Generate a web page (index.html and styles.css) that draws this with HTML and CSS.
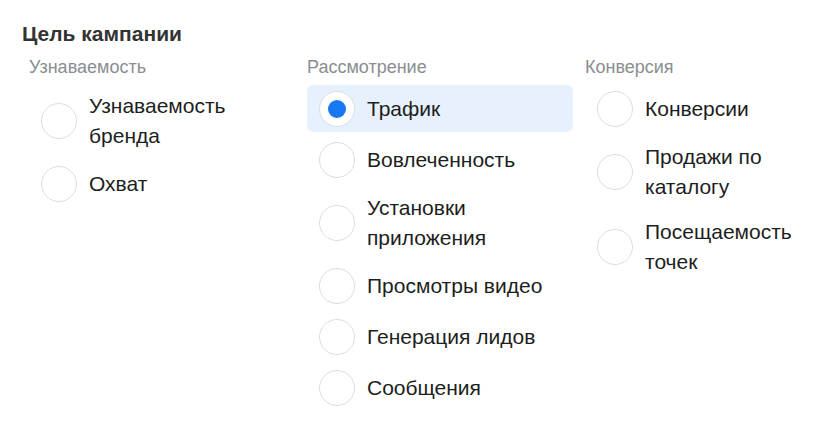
FILE: index.html
```html
<!DOCTYPE html>
<html lang="ru">
<head>
    <meta charset="UTF-8">
    <meta name="viewport" content="width=device-width, initial-scale=1.0">
    <title>Цель кампании</title>
    <link rel="stylesheet" href="styles.css">
</head>
<body>

<div class="objective">
    <h2 class="objective-title">Цель кампании</h2>

    <div class="groups">
        <div class="group">
            <div class="group-label">Узнаваемость</div>
            <div class="option"><span class="radio"></span><span class="option-text">Узнаваемость бренда</span></div>
            <div class="option"><span class="radio"></span><span class="option-text">Охват</span></div>
        </div>

        <div class="group">
            <div class="group-label">Рассмотрение</div>
            <div class="option selected"><span class="radio"></span><span class="option-text">Трафик</span></div>
            <div class="option"><span class="radio"></span><span class="option-text">Вовлеченность</span></div>
            <div class="option"><span class="radio"></span><span class="option-text">Установки приложения</span></div>
            <div class="option"><span class="radio"></span><span class="option-text">Просмотры видео</span></div>
            <div class="option"><span class="radio"></span><span class="option-text">Генерация лидов</span></div>
            <div class="option"><span class="radio"></span><span class="option-text">Сообщения</span></div>
        </div>

        <div class="group">
            <div class="group-label">Конверсия</div>
            <div class="option"><span class="radio"></span><span class="option-text">Конверсии</span></div>
            <div class="option"><span class="radio"></span><span class="option-text">Продажи по каталогу</span></div>
            <div class="option"><span class="radio"></span><span class="option-text">Посещаемость точек</span></div>
        </div>
    </div>
</div>

</body>
</html>
```

FILE: styles.css
```css
body {
    margin: 0;
    background-color: #fff;
    font-family: "Liberation Sans", Arial, sans-serif;
    color: #1c1e21;
}
.objective {
    padding: 22px 0 0 22px;
}
.objective-title {
    margin: 0;
    font-size: 21px;
    line-height: 24px;
    font-weight: bold;
    color: #333;
}
.groups {
    display: grid;
    grid-template-columns: 278px 278px 1fr;
    padding-left: 7px;
    margin-top: 11px;
}
.group {
    display: flex;
    flex-direction: column;
    align-items: flex-start;
    gap: 4px;
}
.group-label {
    font-size: 18px;
    line-height: 20px;
    color: #8a8d91;
    margin-bottom: 4px;
}
.option {
    display: flex;
    align-items: center;
    gap: 12px;
    width: 242px;
    padding: 6px 12px 5px 12px;
    border-radius: 6px;
}
.option.selected {
    background-color: #e7f0fd;
}
.radio {
    flex: none;
    width: 34px;
    height: 34px;
    border: 1px solid #dadde1;
    border-radius: 50%;
    background-color: #fff;
    position: relative;
}
.selected .radio::after {
    content: "";
    position: absolute;
    left: 8px;
    top: 8px;
    width: 18px;
    height: 18px;
    border-radius: 50%;
    background-color: #1877f2;
}
.option-text {
    font-size: 21px;
    line-height: 30px;
    max-width: 190px;
}
```
